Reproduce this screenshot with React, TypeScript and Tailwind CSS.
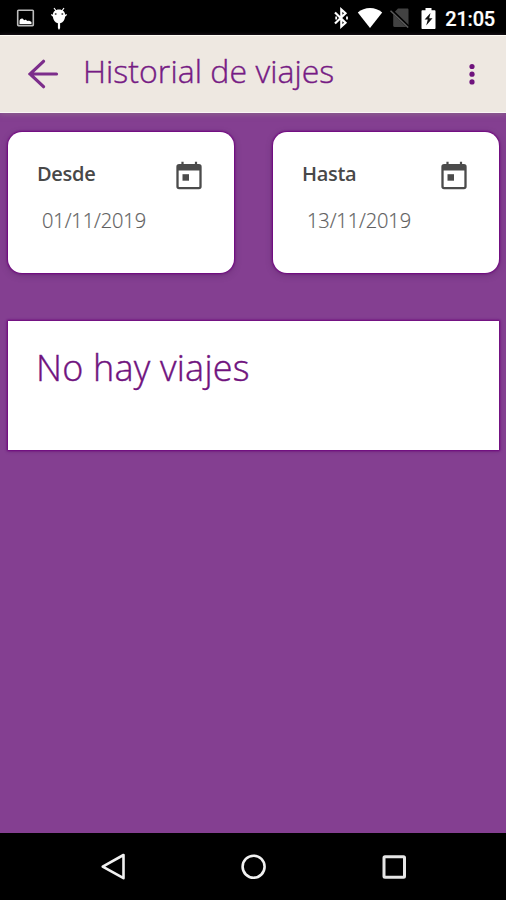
interface DateCardProps {
  label: string;
  value: string;
}

function StatusBar() {
  return (
    <div className="flex h-[35px] shrink-0 items-center bg-black text-white">
      {/* Notifications */}
      <svg className="mt-px ml-4 h-[18px] w-[19px]" viewBox="0 0 19 18" fill="none">
        <rect x="1.7" y="1.2" width="15.6" height="15.4" rx="0.8" stroke="#bdbdbd" strokeWidth="1.6" />
        <path d="M3.5 15v-3.2c.8-2.700 3.400-3 4.500-.6 1.200-1 2.600-.6 3 .9 1.500-.9 3.300-.4 4.500 1V15z" fill="#fff" />
      </svg>
      <svg className="ml-[15px] h-[24px] w-[18px]" viewBox="0 0 18 24">
        <path d="M4 2l2.500 3.500M14 2l-2.500 3.500" stroke="#fff" strokeWidth="1.200" />
        <path
          d="M9 3.600c3.800 0 6 2.400 6.200 5.200l1.400-.9.400 1-1.900 1.800c-.3 3.200-2.100 5.900-5 6.600V22L9 24l-1.100-2v-4.700c-2.900-.7-4.700-3.400-5-6.600L1 8.900l.4-1 1.400.9C3 6 5.200 3.600 9 3.600z"
          fill="#fff"
        />
        <circle cx="5.700" cy="8" r="1" fill="#555" />
        <circle cx="12.300" cy="8" r="1" fill="#555" />
      </svg>
      {/* System icons */}
      <svg className="mt-px ml-auto h-[22px] w-[16px]" viewBox="0 0 16 22" fill="none" stroke="#fff" strokeWidth="2.200">
        <path d="M2 5.500l10.500 10.200L8.300 19.500v-17l4.200 3.800L2 16.500" />
        <path d="M3.200 9.400v3.200M14 9.400v3.200" strokeWidth="1.800" />
      </svg>
      <svg className="mt-px ml-[8px] h-[20px] w-[26px]" viewBox="0 0 26 20">
        <path d="M13 20L.8 4.500C4.200 1.600 8.400 0 13 0s8.800 1.600 12.200 4.500z" fill="#fff" />
      </svg>
      <svg className="mt-px ml-[7px] h-[20px] w-[20px]" viewBox="0 0 20 20">
        <path d="M8 .5h9.300c.7 0 1.200.5 1.200 1.200v16.100c0 .7-.5 1.200-1.200 1.200H4.400c-.7 0-1.200-.5-1.200-1.200V5.500z" fill="#424242" />
        <path d="M1.200 2.200l17.500 17" stroke="#000" strokeWidth="3" />
        <path d="M.5 2.800l17.700 16.700" stroke="#5c5c5c" strokeWidth="1.500" />
      </svg>
      <svg className="mt-px ml-[11px] h-[21px] w-[15px]" viewBox="0 0 15 21">
        <path d="M4.500 0h6v2.200h3c.6 0 1 .4 1 1V20c0 .6-.4 1-1 1h-12c-.6 0-1-.4-1-1V3.200c0-.6.4-1 1-1h3z" fill="#fff" />
        <path d="M9.500 5L3.600 11.500h3.200L5.200 17.500l6.300-7.300H8.200z" fill="#111" />
      </svg>
      <span className="mt-[3px] mr-[11px] ml-[9px] font-['Roboto',sans-serif] text-[20px] leading-none font-medium tracking-[-0.2px] [-webkit-text-stroke:0.2px]">
        21:05
      </span>
    </div>
  );
}

function AppHeader() {
  return (
    <header className="z-10 flex h-[78px] shrink-0 items-center border-t border-b border-t-[#fffdf5] border-b-[#faf5f5] bg-[#eee8e1] pl-7 text-[#761b84] shadow-[0_2px_5px_rgba(140,100,140,0.8)]">
      <svg className="h-[30px] w-[31px]" viewBox="0 0 31 30" fill="none" stroke="#7c2d8b" strokeWidth="3.200" strokeLinecap="round">
        <path d="M2 15h26.500M15.500 2.300L2 15l13.500 12.700" />
      </svg>
      <h1 className="-mt-[6px] ml-[24px] text-[32px] leading-[44px] font-light tracking-[0.05px] whitespace-nowrap [-webkit-text-stroke:0.4px]">
        Historial de viajes
      </h1>
      <svg className="mr-[28px] ml-auto h-[22px] w-[12px]" viewBox="0 0 12 22" fill="#6f137d">
        <circle cx="6" cy="3.500" r="2.600" />
        <circle cx="6" cy="11.200" r="2.600" />
        <circle cx="6" cy="18.900" r="2.600" />
      </svg>
    </header>
  );
}

function CalendarIcon() {
  return (
    <svg className="mt-[2px] h-[30px] w-[28px]" viewBox="0 0 28 30" fill="none">
      <rect x="2.500" y="4.200" width="23" height="23" rx="1.600" stroke="#4b4b4b" strokeWidth="2.300" />
      <path d="M2.500 4h23v5.500h-23z" fill="#4b4b4b" />
      <path d="M7.500 .8v3.500M21 .8v3.500" stroke="#4b4b4b" strokeWidth="2.200" />
      <path d="M7.500 13.200h6.500v6.500H7.500z" fill="#4b4b4b" />
    </svg>
  );
}

function DateCard({ label, value }: DateCardProps) {
  return (
    <div className="h-[141px] w-[226px] rounded-[14px] bg-white pt-[27px] pr-[31px] pl-[29px] shadow-[0_0_2px_1px_#700080,0_2px_7px_rgba(70,30,80,0.4)]">
      <div className="flex h-[30px] justify-between">
        <span className="mt-px text-[20px] leading-[28px] font-semibold tracking-[-0.3px] text-[#484848]">{label}</span>
        <CalendarIcon />
      </div>
      <p className="mt-[18px] pl-[5px] text-[20px] leading-[28px] font-light tracking-[-0.1px] text-[#606060] [-webkit-text-stroke:0.2px]">
        {value}
      </p>
    </div>
  );
}

function NavigationBar() {
  return (
    <nav className="flex h-[67px] shrink-0 items-center justify-between bg-black px-[98px]">
      <svg className="h-[30px] w-[30px]" viewBox="0 0 30 30" fill="none" stroke="#f1f1f1" strokeWidth="2.600" strokeLinejoin="round">
        <path d="M4.700 14.700L25.500 3v23.200z" />
      </svg>
      <svg className="h-[30px] w-[30px]" viewBox="0 0 30 30" fill="none" stroke="#f1f1f1" strokeWidth="2.600">
        <circle cx="15.600" cy="14.700" r="11" />
      </svg>
      <svg className="h-[30px] w-[30px]" viewBox="0 0 30 30" fill="none" stroke="#e6e6e6" strokeWidth="3">
        <rect x="6" y="4.700" width="20.500" height="20.500" rx="1" />
      </svg>
    </nav>
  );
}

export default function App() {
  return (
    <div className="flex h-[900px] w-[506px] flex-col overflow-hidden bg-[#843f91] font-['Open_Sans',sans-serif]">
      <StatusBar />
      <AppHeader />
      <main className="flex-1 pt-[19px] pr-[7px] pl-[8px]">
        <div className="flex justify-between">
          <DateCard label="Desde" value="01/11/2019" />
          <DateCard label="Hasta" value="13/11/2019" />
        </div>
        <section className="mt-[48px] h-[129px] bg-white pt-[22px] pl-[28px] shadow-[0_0_2px_1px_#700080,0_1px_4px_rgba(70,30,80,0.3)]">
          <h2 className="text-[36px] leading-[50px] font-light tracking-[0.2px] text-[#70137e] [-webkit-text-stroke:0.4px]">
            No hay viajes
          </h2>
        </section>
      </main>
      <NavigationBar />
    </div>
  );
}
